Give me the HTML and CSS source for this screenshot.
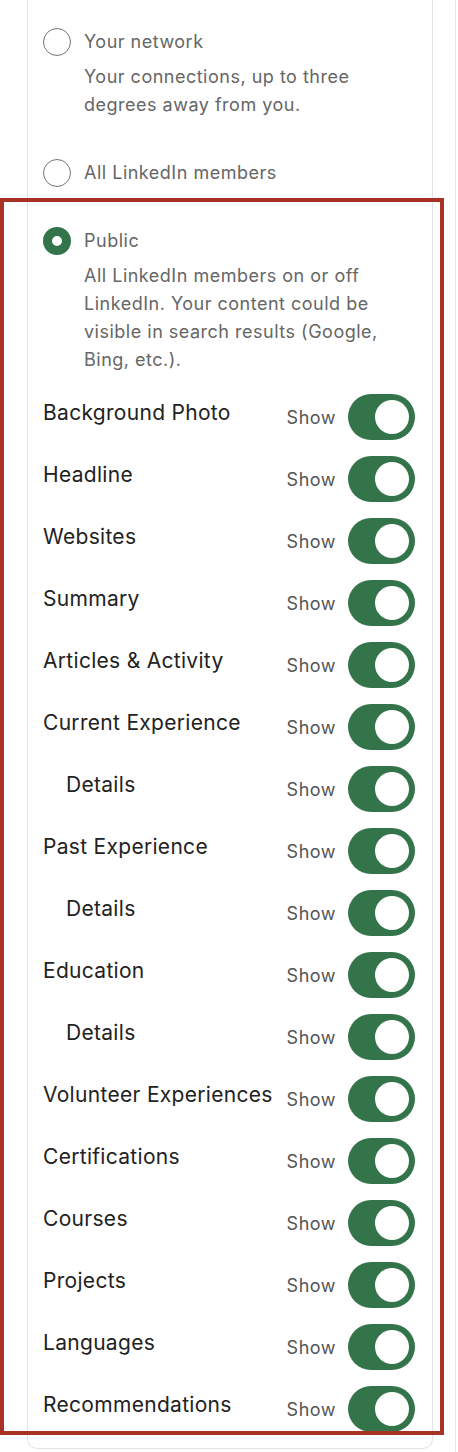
FILE: index.html
```html
<!DOCTYPE html>
<html lang="en">
<head>
  <meta charset="UTF-8">
  <title>Public profile visibility</title>
  <link rel="stylesheet" href="styles.css">
</head>
<body>
  <div class="panel">
    <div class="card">
      <div class="choice">
        <span class="radio"></span>
        <div class="choice-text">
          <div class="choice-title">Your network</div>
          <div class="choice-desc">Your connections, up to three degrees away from you.</div>
        </div>
      </div>
      <div class="choice">
        <span class="radio"></span>
        <div class="choice-text">
          <div class="choice-title">All LinkedIn members</div>
        </div>
      </div>
      <div class="choice">
        <span class="radio checked"></span>
        <div class="choice-text">
          <div class="choice-title">Public</div>
          <div class="choice-desc">All LinkedIn members on or off LinkedIn. Your content could be visible in search results (Google, Bing, etc.).</div>
        </div>
      </div>

      <div class="sections">
        <div class="row"><span class="label">Background Photo</span><span class="state">Show</span><span class="toggle"></span></div>
        <div class="row"><span class="label">Headline</span><span class="state">Show</span><span class="toggle"></span></div>
        <div class="row"><span class="label">Websites</span><span class="state">Show</span><span class="toggle"></span></div>
        <div class="row"><span class="label">Summary</span><span class="state">Show</span><span class="toggle"></span></div>
        <div class="row"><span class="label">Articles &amp; Activity</span><span class="state">Show</span><span class="toggle"></span></div>
        <div class="row"><span class="label">Current Experience</span><span class="state">Show</span><span class="toggle"></span></div>
        <div class="row sub"><span class="label">Details</span><span class="state">Show</span><span class="toggle"></span></div>
        <div class="row"><span class="label">Past Experience</span><span class="state">Show</span><span class="toggle"></span></div>
        <div class="row sub"><span class="label">Details</span><span class="state">Show</span><span class="toggle"></span></div>
        <div class="row"><span class="label">Education</span><span class="state">Show</span><span class="toggle"></span></div>
        <div class="row sub"><span class="label">Details</span><span class="state">Show</span><span class="toggle"></span></div>
        <div class="row"><span class="label">Volunteer Experiences</span><span class="state">Show</span><span class="toggle"></span></div>
        <div class="row"><span class="label">Certifications</span><span class="state">Show</span><span class="toggle"></span></div>
        <div class="row"><span class="label">Courses</span><span class="state">Show</span><span class="toggle"></span></div>
        <div class="row"><span class="label">Projects</span><span class="state">Show</span><span class="toggle"></span></div>
        <div class="row"><span class="label">Languages</span><span class="state">Show</span><span class="toggle"></span></div>
        <div class="row"><span class="label">Recommendations</span><span class="state">Show</span><span class="toggle"></span></div>
      </div>
    </div>
    <div class="highlight"></div>
  </div>
</body>
</html>
```

FILE: styles.css
```css
body{
  margin: 0;
  padding: 0;
  background: #fff;
  font-family: Inter, "Liberation Sans", sans-serif;
}
.panel{
  position: relative;
  width: 455px;
  height: 1452px;
  border-right: 1px solid #e6e6e6;
}
.card{
  margin-left: 27px;
  width: 406px;
  border: 1px solid #e3e3e3;
  border-top: none;
  border-radius: 0 0 10px 10px;
  padding: 28px 0 8px 15px;
  box-sizing: border-box;
}

/* visibility radio choices */
.choice{
  display: flex;
  align-items: flex-start;
  margin-bottom: 40px;
}
.choice:nth-child(3){
  margin-bottom: 12px;
}
.radio{
  width: 28px;
  height: 28px;
  box-sizing: border-box;
  border: 1.5px solid #767676;
  border-radius: 50%;
  margin-right: 13px;
  flex-shrink: 0;
}
.radio.checked{
  border: 9px solid #34744a;
}
.choice-text{
  color: #666;
  font-size: 18px;
  letter-spacing: 0.5px;
  line-height: 28px;
  width: 305px;
}
.choice-title{
  margin-bottom: 7px;
}
.choice-title:last-child{
  margin-bottom: 0;
}

/* section toggles */
.row{
  display: flex;
  align-items: center;
  height: 62px;
  padding-right: 17px;
}
.row .label{
  flex: 1;
  color: #222;
  font-size: 21px;
  letter-spacing: 0.3px;
  margin-bottom: 10px;
  white-space: nowrap;
}
.row.sub .label{
  padding-left: 23px;
}
.state{
  color: #555;
  font-size: 18px;
  letter-spacing: 0.5px;
  margin-right: 12px;
}
.toggle{
  position: relative;
  width: 67px;
  height: 46px;
  border-radius: 23px;
  background: #34744a;
}
.toggle::after{
  content: "";
  position: absolute;
  right: 6px;
  top: 6px;
  width: 34px;
  height: 34px;
  border-radius: 50%;
  background: #fff;
}

.highlight{
  position: absolute;
  left: 0;
  top: 198px;
  width: 444px;
  height: 1237px;
  box-sizing: border-box;
  border: 4px solid #a93226;
}
```
